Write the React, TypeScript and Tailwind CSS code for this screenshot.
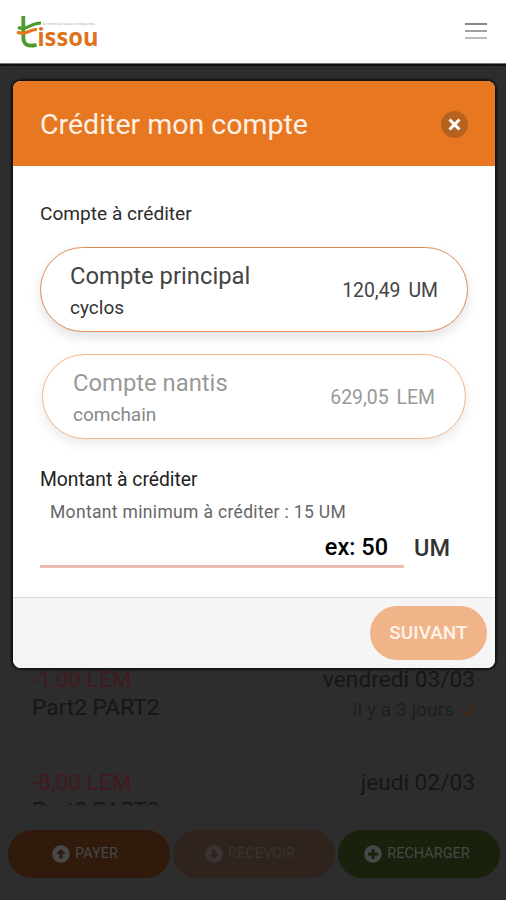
import React from 'react';
import { FaArrowAltCircleDown, FaArrowAltCircleUp, FaCheck, FaPlusCircle } from 'react-icons/fa';

interface Account {
  name: string;
  backend: string;
  balance: string;
  currency: string;
  selected: boolean;
}

interface Transaction {
  amount: string;
  date: string;
  name: string;
  ago: string;
}

const accounts: Account[] = [
  { name: 'Compte principal', backend: 'cyclos', balance: '120,49', currency: 'UM', selected: true },
  { name: 'Compte nantis', backend: 'comchain', balance: '629,05', currency: 'LEM', selected: false },
];

const transactions: Transaction[] = [
  { amount: '-1,00 LEM', date: 'vendredi 03/03', name: 'Part2 PART2', ago: 'il y a 3 jours' },
  { amount: '-8,00 LEM', date: 'jeudi 02/03', name: 'Part2 PART2', ago: 'il y a 4 jours' },
];

const Logo: React.FC = () => (
  <svg width="84" height="40" viewBox="0 0 84 40" fill="none" aria-label="tissou">
    <path d="M7.300 1 V21 C7 30 12 32 20.500 29.800" stroke="#4d9a2e" strokeWidth="3.800" />
    <path d="M2 12.500 C11 16 14 8 25 8" stroke="#4d9a2e" strokeWidth="3.200" />
    <path d="M1 17 C10 21 13 14 21 14.500" stroke="#e87722" strokeWidth="3.200" />
    <text x="27" y="10" fontFamily="Open Sans, sans-serif" fontSize="4" fill="#a5a5a5" textLength="52">la monnaie locale et citoyenne</text>
    <text x="21.500" y="30.800" fontFamily="Noto Sans, sans-serif" fontWeight="700" fontSize="25" fill="#dd7320" textLength="61" lengthAdjust="spacingAndGlyphs">issou</text>
  </svg>
);

const Header: React.FC = () => (
  <header className="flex h-16 items-start justify-between border-b border-[#777] bg-white pl-4 pr-[19px]">
    <div className="pt-[15px]">
      <Logo />
    </div>
    <button className="mt-[23px] flex w-[22px] flex-col gap-[5px]" aria-label="Menu">
      <span className="h-[2px] bg-[#888]" />
      <span className="h-[2px] bg-[#a0a0a0]" />
      <span className="h-[2px] bg-[#bbb]" />
    </button>
  </header>
);

const TransactionRow: React.FC<{ transaction: Transaction }> = ({ transaction }) => (
  <li className="h-[103px] text-[22.700px] leading-7 text-[#161616]">
    <div className="flex justify-between">
      <span className="text-[#42191f]">{transaction.amount}</span>
      <span>{transaction.date}</span>
    </div>
    <div className="flex justify-between">
      <span>{transaction.name}</span>
      <span className="flex items-center gap-1.5 pt-0.5 text-[19.200px] text-[#1e1e1e]">
        {transaction.ago}
        <FaCheck className="size-[15px] text-[#3d2517]" />
      </span>
    </div>
  </li>
);

const BottomBar: React.FC = () => (
  <nav className="flex h-[95px] shrink-0 gap-[3px] border-t border-[#292929] bg-[#2d2d2d] pl-2 pr-1.5 pt-6 text-[14.500px] text-[#484848]">
    <button className="flex h-12 w-[162px] items-center justify-center gap-[5px] rounded-full bg-[#301a0c] pr-2">
      <FaArrowAltCircleUp className="size-[18px]" />
      PAYER
    </button>
    <button className="flex h-12 w-[162px] items-center justify-center gap-[5px] rounded-full bg-[#2e231d] pr-2 text-[#393431]">
      <FaArrowAltCircleDown className="size-[18px]" />
      RECEVOIR
    </button>
    <button className="flex h-12 w-[162px] items-center justify-center gap-[5px] rounded-full bg-[#18210b] pr-1">
      <FaPlusCircle className="size-[18px]" />
      RECHARGER
    </button>
  </nav>
);

const AccountCard: React.FC<{ account: Account }> = ({ account }) => (
  <div
    className={
      account.selected
        ? 'flex h-[85px] items-center justify-between rounded-full border-[1.500px] border-[#e38b54] bg-white px-[29px] text-[#444] shadow-[0_5px_12px_rgba(0,0,0,0.12)]'
        : 'mx-[2px] flex h-[85px] items-center justify-between rounded-full border-[1.500px] border-[#f1b78e] bg-white pl-[30px] pr-[30px] text-[#999] shadow-[0_5px_12px_rgba(0,0,0,0.09)]'
    }
  >
    <div className="pt-1">
      <div className="text-[23.800px] leading-8">{account.name}</div>
      <div className={account.selected ? 'text-[19px] leading-8 text-[#333]' : 'text-[19px] leading-8 text-[#888]'}>
        {account.backend}
      </div>
    </div>
    <div className="flex gap-2 pt-0.5 text-[19.400px]">
      <span>{account.balance}</span>
      <span>{account.currency}</span>
    </div>
  </div>
);

const CreditModal: React.FC = () => (
  <div
    role="dialog"
    className="absolute left-[13px] top-[81px] flex h-[587px] w-[482px] flex-col overflow-hidden rounded-lg bg-white shadow-[0_0_2px_2px_rgba(0,0,0,0.6)]"
  >
    <div className="flex h-[85px] shrink-0 items-center justify-between bg-[#e87722] px-[27px]">
      <h2 className="pt-1 text-[28.500px] text-[#fff1e5]">Créditer mon compte</h2>
      <button className="mt-0.5 flex size-[27px] items-center justify-center rounded-full bg-[#b7611f]" aria-label="Fermer">
        <svg width="13" height="13" viewBox="0 0 13 13" stroke="#fff" strokeWidth="3">
          <path d="M1.500 1.500 L11.500 11.500 M11.500 1.500 L1.500 11.500" />
        </svg>
      </button>
    </div>
    <div className="flex-1 px-[27px] pt-[33px]">
      <h3 className="text-[19.100px] leading-[30px] text-[#2b2b2b]">Compte à créditer</h3>
      <div className="mt-[18px] flex flex-col gap-[22px]">
        {accounts.map((account) => (
          <AccountCard key={account.name} account={account} />
        ))}
      </div>
      <h3 className="mt-[26px] text-[19.300px] leading-[30px] text-[#222]">Montant à créditer</h3>
      <p className="pl-2.5 pt-0.5 text-[17.500px] leading-[30px] tracking-[0.019em] text-[#666]">
        Montant minimum à créditer : 15 UM
      </p>
      <div className="flex items-start text-[23.500px] leading-9">
        <div className="h-[41px] w-[364px] border-b-[3px] border-[#e8bcae] pr-4 pt-[2px] text-right font-medium text-black">
          ex: 50
        </div>
        <span className="pl-2.5 pt-[3px] font-medium text-[#333]">UM</span>
      </div>
    </div>
    <div className="flex h-[71px] shrink-0 items-start justify-end border-t border-[#dbdbdb] bg-[#f5f5f5] pr-2 pt-2">
      <button className="h-[54px] w-[117px] rounded-full bg-[#f0b488] text-[19px] font-medium text-[#fff3ea]">SUIVANT</button>
    </div>
  </div>
);

export default function App() {
  return (
    <div className="relative flex h-[900px] w-[506px] flex-col overflow-hidden bg-[#2d2d2d] font-['Roboto',sans-serif]">
      <Header />
      <main className="flex min-h-0 flex-1 flex-col overflow-hidden border-t-2 border-[#111] px-[11px]">
        <ul className="flex-1 border-x border-[#2a2a2a] pl-5 pr-[19px] pt-[600px]">
          {transactions.map((transaction) => (
            <TransactionRow key={transaction.date} transaction={transaction} />
          ))}
        </ul>
      </main>
      <BottomBar />
      <CreditModal />
    </div>
  );
}
